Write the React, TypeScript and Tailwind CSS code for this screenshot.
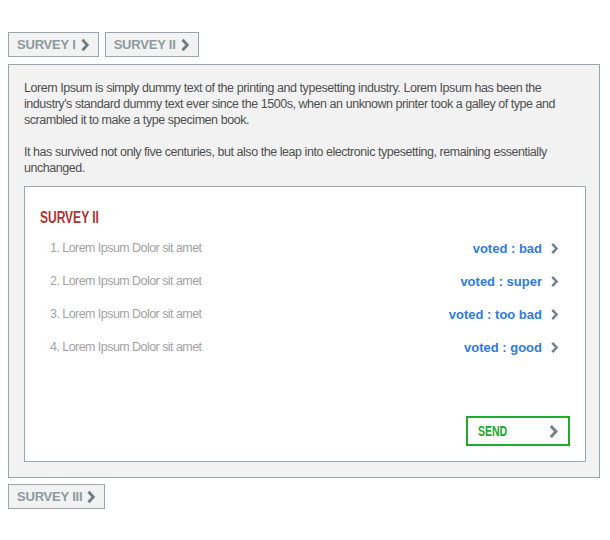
import React from 'react';

const font = { fontFamily: '"Liberation Sans", Arial, sans-serif' };

function Chevron({ className = '' }: { className?: string }) {
  return (
    <svg viewBox="0 0 10 14" className={className} fill="none">
      <path d="M2.5 1.8 L7.3 7 L2.5 12.2" stroke="currentColor" strokeWidth="2.8" strokeLinejoin="miter" />
    </svg>
  );
}

function Tab({ label }: { label: string }) {
  return (
    <button className="h-[25px] pl-[8px] pr-[8px] flex items-center gap-[4px] bg-[#f2f2f2] border border-[#9aa6ab] text-[#8d9a9f] text-[13px] font-bold tracking-[-0.2px]">
      {label}
      <Chevron className="w-[10px] h-[14px] text-[#6f7c81]" />
    </button>
  );
}

const items = [
  { q: 'Lorem Ipsum Dolor sit amet', v: 'voted : bad' },
  { q: 'Lorem Ipsum Dolor sit amet', v: 'voted : super' },
  { q: 'Lorem Ipsum Dolor sit amet', v: 'voted : too bad' },
  { q: 'Lorem Ipsum Dolor sit amet', v: 'voted : good' },
];

export default function App() {
  return (
    <div className="w-[610px] h-[540px] bg-white pt-[32px] px-[8px]" style={font}>
      <div className="flex gap-[6px]">
        <Tab label="SURVEY I" />
        <Tab label="SURVEY II" />
      </div>

      <div className="mt-[7px] w-[592px] bg-[#f2f2f2] border border-[#9aa6ab] pl-[15px] pt-[15px] pb-[15px]">
        <p className="text-[12.5px] leading-[16px] text-[#505050] tracking-[-0.45px] whitespace-nowrap">
          Lorem Ipsum is simply dummy text of the printing and typesetting industry. Lorem Ipsum has been the<br />
          industry's standard dummy text ever since the 1500s, when an unknown printer took a galley of type and<br />
          scrambled it to make a type specimen book.
        </p>
        <p className="mt-[16px] text-[12.5px] leading-[16px] text-[#505050] tracking-[-0.45px] whitespace-nowrap">
          It has survived not only five centuries, but also the leap into electronic typesetting, remaining essentially<br />
          unchanged.
        </p>

        <div className="mt-[10px] w-[562px] h-[276px] bg-white border border-[#9aa6ab] pl-[15px] pr-[26px] pt-[21px] flex flex-col">
          <h2 className="text-[16px] font-bold text-[#b0322e] leading-[20px] scale-x-75 origin-left">SURVEY II</h2>
          <ul className="mt-[4px]">
            {items.map((it, i) => (
              <li key={i} className="h-[33px] flex items-center justify-between pl-[10px]">
                <span className="text-[12.5px] text-[#a2a2a2] tracking-[-0.55px]">{i + 1}. {it.q}</span>
                <span className="flex items-center gap-[8px]">
                  <span className="text-[13px] font-bold text-[#2f7be6]">{it.v}</span>
                  <Chevron className="w-[9px] h-[13px] text-[#74818a]" />
                </span>
              </li>
            ))}
          </ul>
          <div className="flex justify-end mt-auto mb-[15px] -mr-[11px]">
            <button className="w-[104px] h-[30px] border-2 border-[#1faa2c] flex items-center justify-between pl-[10px] pr-[9px] text-[#1aa82a] text-[14px] font-bold">
              <span className="scale-x-75 origin-left inline-block">SEND</span>
              <Chevron className="w-[11px] h-[15px] text-[#74818a]" />
            </button>
          </div>
        </div>
      </div>

      <div className="mt-[6px] flex">
        <Tab label="SURVEY III" />
      </div>
    </div>
  );
}
